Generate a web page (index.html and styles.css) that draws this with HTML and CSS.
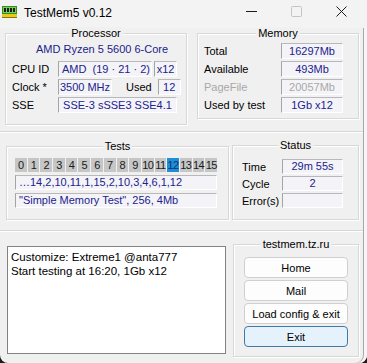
FILE: index.html
```html
<!DOCTYPE html>
<html lang="en">
<head>
    <meta charset="UTF-8">
    <title>TestMem5 v0.12</title>
    <link rel="stylesheet" href="styles.css">
</head>
<body>
    <div class="window">
        <div class="titlebar">
            <svg class="app-icon" width="15" height="12" viewBox="0 0 15 12">
                <rect x="0" y="0" width="15" height="8" fill="#2f8f2f"/>
                <rect x="1" y="1" width="13" height="6" fill="#7fd04a"/>
                <rect x="2" y="2" width="2" height="4" fill="#1a1a1a"/>
                <rect x="5" y="2" width="2" height="4" fill="#1a1a1a"/>
                <rect x="8" y="2" width="2" height="4" fill="#1a1a1a"/>
                <rect x="11" y="2" width="2" height="4" fill="#1a1a1a"/>
                <rect x="0" y="8" width="15" height="3" fill="#e8c81a"/>
                <rect x="0" y="11" width="15" height="1" fill="#8a7410"/>
            </svg>
            <span class="title">TestMem5 v0.12</span>
            <div class="controls">
                <span class="ctl"><svg width="11" height="11" viewBox="0 0 11 11"><line x1="0" y1="5.5" x2="11" y2="5.5" stroke="#1a1a1a" stroke-width="1"/></svg></span>
                <span class="ctl"><svg width="11" height="11" viewBox="0 0 11 11"><rect x="0.5" y="0.5" width="10" height="10" rx="1" fill="none" stroke="#c4c4c4"/></svg></span>
                <span class="ctl"><svg width="11" height="11" viewBox="0 0 11 11"><path d="M0.5 0.5 L10.5 10.5 M10.5 0.5 L0.5 10.5" stroke="#1a1a1a" stroke-width="1"/></svg></span>
            </div>
        </div>

        <div class="panel panel-top">
            <div class="group processor">
                <div class="group-title">Processor</div>
                <div class="cpu-name">AMD Ryzen 5 5600 6-Core</div>
                <div class="row">
                    <span class="label">CPU ID</span>
                    <span class="field left cpu-id">AMD  (19 · 21 · 2)</span>
                    <span class="field threads">x12</span>
                </div>
                <div class="row">
                    <span class="label">Clock *</span>
                    <span class="field clock">3500 MHz</span>
                    <span class="label used">Used</span>
                    <span class="field threads">12</span>
                </div>
                <div class="row">
                    <span class="label">SSE</span>
                    <span class="field sse">SSE-3 sSSE3 SSE4.1</span>
                </div>
            </div>
            <div class="group memory">
                <div class="group-title">Memory</div>
                <div class="row">
                    <span class="label">Total</span>
                    <span class="field mem">16297Mb</span>
                </div>
                <div class="row">
                    <span class="label">Available</span>
                    <span class="field mem">493Mb</span>
                </div>
                <div class="row disabled">
                    <span class="label">PageFile</span>
                    <span class="field mem">20057Mb</span>
                </div>
                <div class="row">
                    <span class="label">Used by test</span>
                    <span class="field mem">1Gb x12</span>
                </div>
            </div>
        </div>

        <div class="panel panel-mid">
            <div class="group tests">
                <div class="group-title">Tests</div>
                <div class="cells">
                    <span class="cell">0</span><span class="cell">1</span><span class="cell">2</span><span class="cell">3</span>
                    <span class="cell">4</span><span class="cell">5</span><span class="cell">6</span><span class="cell">7</span>
                    <span class="cell">8</span><span class="cell">9</span><span class="cell">10</span><span class="cell">11</span>
                    <span class="cell active">12</span><span class="cell">13</span><span class="cell">14</span><span class="cell">15</span>
                </div>
                <div class="field left wide">…14,2,10,11,1,15,2,10,3,4,6,1,12</div>
                <div class="field left wide">"Simple Memory Test", 256, 4Mb</div>
            </div>
            <div class="group status">
                <div class="group-title">Status</div>
                <div class="row">
                    <span class="label">Time</span>
                    <span class="field stat">29m 55s</span>
                </div>
                <div class="row">
                    <span class="label">Cycle</span>
                    <span class="field stat">2</span>
                </div>
                <div class="row">
                    <span class="label">Error(s)</span>
                    <span class="field stat"></span>
                </div>
            </div>
        </div>

        <div class="panel panel-bottom">
            <div class="log">Customize: Extreme1 @anta777
Start testing at 16:20, 1Gb x12</div>
            <div class="group links">
                <div class="group-title">testmem.tz.ru</div>
                <button class="btn">Home</button>
                <button class="btn">Mail</button>
                <button class="btn">Load config &amp; exit</button>
                <button class="btn default">Exit</button>
            </div>
        </div>
    </div>
</body>
</html>
```

FILE: styles.css
```css
body {
    margin: 0;
    background-color: #1c1c1c;
    font-family: "Liberation Sans", Arial, sans-serif;
    font-size: 11px;
    color: #000;
}
.window {
    width: 367px;
    height: 363px;
    background-color: #f0f0f0;
    border-radius: 0 0 8px 8px;
    box-shadow: inset -3px 0 0 #f6f6f6, inset -4px 0 0 #a9a9a9;
    overflow: hidden;
}
.titlebar {
    height: 28px;
    display: flex;
    align-items: center;
    background-color: #f3f3f3;
}
.app-icon {
    margin-left: 2px;
    margin-top: -4px;
}
.title {
    margin-left: 7px;
    font-size: 12px;
    margin-top: -2px;
}
.controls {
    margin-left: auto;
    margin-right: 3px;
    display: flex;
    align-self: stretch;
}
.ctl {
    width: 45px;
    display: flex;
    align-items: center;
    justify-content: center;
    margin-top: -6px;
}

/* panels */
.panel {
    display: flex;
    box-sizing: border-box;
    width: 363px;
    border-bottom: 1px solid #d6d6d6;
    box-shadow: 0 1px 0 #fff;
}
.panel-top {
    height: 104px;
    padding: 5px 0 0 5px;
}
.panel-mid {
    height: 99px;
    padding: 14px 0 0 6px;
}
.panel-bottom {
    height: 132px;
    padding: 14px 0 0 7px;
    border-bottom: none;
    box-shadow: none;
}

/* group boxes */
.group {
    position: relative;
    box-sizing: border-box;
    border: 1px solid #d8d8d8;
    box-shadow: inset 1px 1px 0 #fff, 1px 1px 0 #fff;
}
.group-title {
    position: absolute;
    top: -7px;
    left: 50%;
    transform: translateX(-50%);
    padding: 0 2px;
    line-height: 13px;
    background-color: #f0f0f0;
    white-space: nowrap;
}
.processor {
    width: 182px;
    height: 92px;
    padding: 8px 0 0 6px;
}
.memory {
    width: 162px;
    height: 86px;
    margin-left: 10px;
    padding: 9px 0 0 6px;
}
.tests {
    width: 223px;
    height: 74px;
    padding: 11px 0 0 8px;
}
.status {
    width: 127px;
    height: 75px;
    margin-left: 3px;
    margin-top: -1px;
    padding: 13px 0 0 9px;
}
.links {
    width: 126px;
    height: 113px;
    margin-left: 7px;
    margin-top: -1px;
    padding: 12px 0 0 10px;
    display: flex;
    flex-direction: column;
    gap: 2px;
}

/* rows and fields */
.cpu-name {
    height: 14px;
    line-height: 14px;
    margin: 0 0 5px 24px;
    color: #22228c;
}
.row {
    display: flex;
    align-items: center;
    height: 16px;
    margin-bottom: 2px;
}
.label {
    white-space: nowrap;
}
.processor .label {
    width: 46px;
}
.processor .label.used {
    width: auto;
    margin: 0 4px 0 14px;
}
.memory .label {
    width: 77px;
}
.status .label {
    width: 40px;
}
.status .row {
    height: 15px;
    margin-bottom: 2px;
}
.field {
    box-sizing: border-box;
    height: 16px;
    line-height: 14px;
    background-color: #f4f4f8;
    border-top: 1px solid #b8b8b8;
    border-left: 1px solid #a4a4a4;
    border-bottom: 1px solid #fff;
    border-right: 1px solid #fff;
    color: #22228c;
    text-align: center;
    white-space: pre;
    overflow: hidden;
}
.field.left {
    text-align: left;
    padding-left: 3px;
}
.cpu-id {
    width: 94px;
}
.threads {
    width: 23px;
    margin-left: 2px;
}
.clock {
    width: 54px;
}
.sse {
    width: 119px;
}
.mem {
    width: 62px;
}
.disabled .label,
.disabled .field {
    color: #a8a8a8;
}
.stat {
    width: 61px;
    height: 15px;
    line-height: 13px;
}
.wide {
    width: 202px;
    height: 15px;
    line-height: 13px;
    margin-top: 3px;
    padding-left: 1px;
}

/* test number cells */
.cells {
    display: grid;
    grid-template-columns: repeat(16, 1fr);
    gap: 1px;
    width: 202px;
    height: 14px;
    margin-bottom: 1px;
}
.cell {
    background-color: #c6c6c6;
    color: #1a1a1a;
    text-align: center;
    line-height: 14px;
    letter-spacing: -0.6px;
    white-space: nowrap;
}
.cell.active {
    background-color: #1c8fd8;
    color: #14306e;
}

/* log and buttons */
.log {
    box-sizing: border-box;
    width: 219px;
    height: 108px;
    margin-top: 1px;
    padding: 3px 3px;
    background-color: #fff;
    border: 1px solid #838383;
    font-size: 11.5px;
    line-height: 14px;
    white-space: pre;
}
.btn {
    box-sizing: border-box;
    width: 104px;
    height: 21px;
    padding: 0;
    background-color: #fdfdfd;
    border: 1px solid #d0d0d0;
    border-radius: 4px;
    font-family: inherit;
    font-size: 11px;
    color: #000;
}
.btn.default {
    background-color: #e5f1fb;
    border-color: #3d7ca8;
}
```
